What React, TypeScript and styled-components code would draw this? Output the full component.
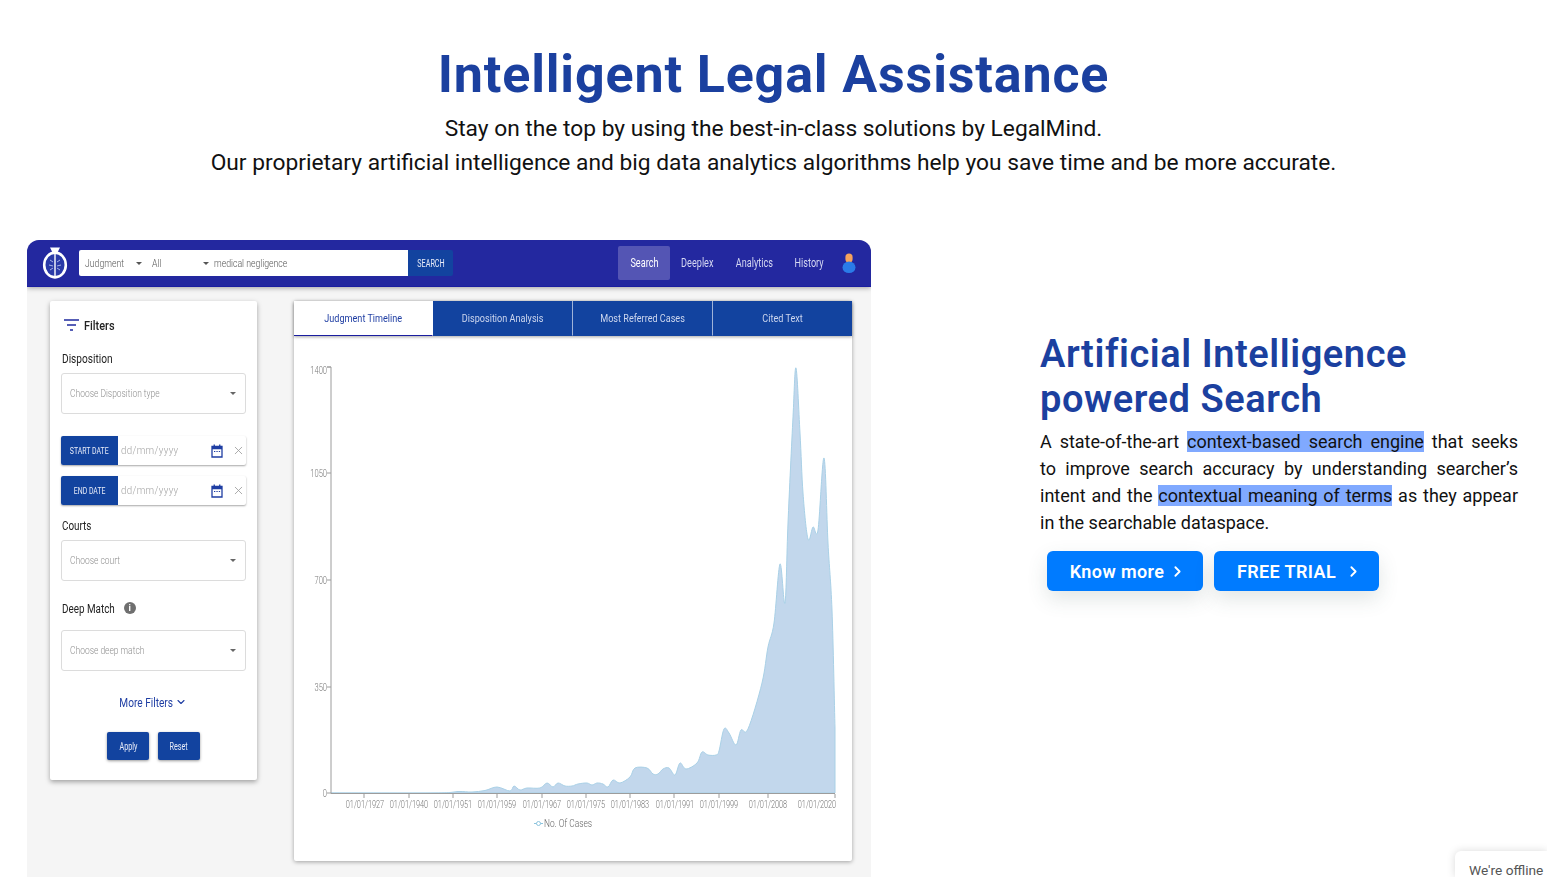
import React from 'react';
import styled, { createGlobalStyle } from 'styled-components';
import { ChevronDown, ChevronRight, X } from 'lucide-react';

const PLEX = `Roboto, "Liberation Sans", sans-serif`;

const GlobalStyle = createGlobalStyle`
  html, body {
    margin: 0;
    height: 100%;
    overflow: hidden;
    background: #fff;
  }
  * { box-sizing: border-box; }
`;

// page coordinates of the area's outline, read off the reference
const AREA: [number, number][] = [
  [331, 793], [435, 793], [458, 791.5], [472, 792], [485, 790.5], [497, 787], [510, 791], [514, 786], [520, 790],
  [527, 788], [540, 788], [547, 783], [553, 787], [558, 783], [565, 786], [572, 786], [578, 784], [587, 783],
  [592, 785], [597, 783], [603, 784], [608, 787], [613, 780], [620, 783], [630, 777], [635, 768], [647, 768],
  [653, 774], [658, 774], [663, 769], [669, 768], [675, 775], [680, 763], [686, 769], [697, 763], [702, 752],
  [708, 755], [716, 755], [719, 751], [724, 729], [729, 733], [736, 745], [741, 730], [748, 729], [762, 683],
  [768, 647], [774, 623], [780, 564], [785, 603], [788, 523], [793, 417], [796, 368], [800, 433], [803, 493],
  [808, 539], [813, 527], [818, 530], [824, 458], [828, 543], [832, 610], [835, 728],
];

const smoothPath = (pts: [number, number][]) => {
  let d = `M${pts[0][0]} ${pts[0][1]}`;
  for (let i = 0; i < pts.length - 1; i++) {
    const p0 = pts[Math.max(i - 1, 0)];
    const p1 = pts[i];
    const p2 = pts[i + 1];
    const p3 = pts[Math.min(i + 2, pts.length - 1)];
    const c1x = p1[0] + (p2[0] - p0[0]) / 6;
    const c1y = p1[1] + (p2[1] - p0[1]) / 6;
    const c2x = p2[0] - (p3[0] - p1[0]) / 6;
    const c2y = p2[1] - (p3[1] - p1[1]) / 6;
    d += ` C${c1x.toFixed(1)} ${c1y.toFixed(1)} ${c2x.toFixed(1)} ${c2y.toFixed(1)} ${p2[0]} ${p2[1]}`;
  }
  return d;
};

const X_TICKS: [number, string][] = [
  [365, '01/01/1927'], [409, '01/01/1940'], [453, '01/01/1951'], [497, '01/01/1959'], [542, '01/01/1967'],
  [586, '01/01/1975'], [630, '01/01/1983'], [675, '01/01/1991'], [719, '01/01/1999'], [768, '01/01/2008'],
  [817, '01/01/2020'],
];
const Y_TICKS: [number, number, string][] = [
  [367, 374, '1400'],
  [473, 477, '1050'],
  [580, 584, '700'],
  [687, 691, '350'],
  [793, 797, '0'],
];

const Logo = () => (
  <svg width="26" height="33" viewBox="0 0 26 33">
    <path d="M8 0.5h10l-2.5 5h-5z" fill="#fff" />
    <ellipse cx="13" cy="18" rx="10.8" ry="12.4" fill="#2a3aa8" stroke="#fff" strokeWidth="2.6" />
    <path d="M13 5v25" stroke="#fff" strokeWidth="1.4" />
    <path d="M8 13l3 2M7 18l4 1M8 23l3-2M18 13l-3 2M19 18l-4 1M18 23l-3-2" stroke="#aab4e6" strokeWidth="1" />
  </svg>
);

const UserIcon = () => (
  <svg width="14" height="20" viewBox="0 0 14 20">
    <rect x="3.4" y="0.5" width="7.2" height="9" rx="3.6" fill="#f5a25d" />
    <path d="M0.5 14.5a6.5 6 0 0 1 13 0a6.5 5.5 0 0 1-13 0z" fill="#2a7be8" />
  </svg>
);

const FilterIcon = () => (
  <svg width="15" height="12" viewBox="0 0 15 12">
    <path d="M0 1h15M3 6h9M6 11h3" stroke="#1f2a9f" strokeWidth="1.6" />
  </svg>
);

const CalendarIcon = () => (
  <svg width="12" height="14" viewBox="0 0 12 14">
    <path d="M1 2.5h10v10.5h-10z" fill="none" stroke="#1f3ea3" strokeWidth="1.3" />
    <path d="M1 2h10v3.2h-10zM2.6 0.4h1.3v2h-1.3zM8.1 0.4h1.3v2h-1.3z" fill="#1f3ea3" />
    <path d="M3 7.5h1.3M5.4 7.5h1.3M7.8 7.5h1.3" stroke="#1f3ea3" strokeWidth="1" />
  </svg>
);

const Select = ({ placeholder }: { placeholder: string }) => (
  <S.Select>
    <S.Squeezed $scale={0.77}>{placeholder}</S.Squeezed>
    <S.Caret $color="#666" />
  </S.Select>
);

const DateField = ({ label }: { label: string }) => (
  <S.DateRow>
    <S.DateLabel>
      <S.Squeezed $center $scale={0.77}>
        {label}
      </S.Squeezed>
    </S.DateLabel>
    <S.DateHint>
      <S.Squeezed $scale={0.88}>dd/mm/yyyy</S.Squeezed>
    </S.DateHint>
    <CalendarIcon />
    <X size={13} color="#9a9a9a" strokeWidth={1.5} />
  </S.DateRow>
);

const Chart = () => (
  <S.ChartSvg viewBox="294 336 558 525">
    <path d={`${smoothPath(AREA)} L835 793 Z`} fill="#c2d7ec" stroke="#a9d0e6" strokeWidth="1" />
    <path d="M327 367h4v426.5h504" fill="none" stroke="#9c9c9c" strokeWidth="1" />
    {Y_TICKS.map(([y, textY, label]) => (
      <g key={label}>
        <path d={`M327 ${y}h4`} stroke="#9c9c9c" />
        <S.AxisText transform={`translate(327 ${textY}) scale(0.72 1)`} textAnchor="end">
          {label}
        </S.AxisText>
      </g>
    ))}
    {[364, 409, 453, 497, 542, 586, 630, 674, 719, 768, 835].map((x) => (
      <path key={x} d={`M${x} 794v4`} stroke="#9c9c9c" />
    ))}
    {X_TICKS.map(([x, label]) => (
      <S.AxisText key={label} transform={`translate(${x} 808) scale(0.7 1)`} textAnchor="middle">
        {label}
      </S.AxisText>
    ))}
    <path d="M534 823.5h9" stroke="#8cc4de" strokeWidth="1" />
    <circle cx="538.5" cy="823.5" r="2" fill="#fff" stroke="#8cc4de" />
    <S.AxisText transform="translate(544 827) scale(0.8 1)" $dark>
      No. Of Cases
    </S.AxisText>
  </S.ChartSvg>
);

const App = () => {
  return (
    <>
      <GlobalStyle />
      <S.Page>
        <S.Hero>
          <S.Title>Intelligent Legal Assistance</S.Title>
          <S.Subtitle>Stay on the top by using the best-in-class solutions by LegalMind.</S.Subtitle>
          <S.Subtitle>
            Our proprietary artificial intelligence and big data analytics algorithms help you save time and be more
            accurate.
          </S.Subtitle>
        </S.Hero>

        <S.Feature>
          <S.Mock>
            <S.MockNav>
              <S.LogoBox>
                <Logo />
              </S.LogoBox>
              <S.SearchBox>
                <S.SearchType $width={67} $pad={10}>
                  <S.Squeezed>Judgment</S.Squeezed>
                  <S.Caret $color="#555" />
                </S.SearchType>
                <S.SearchType $width={61} $pad={4}>
                  <S.Squeezed>All</S.Squeezed>
                  <S.Caret $color="#555" />
                </S.SearchType>
                <S.SearchQuery>
                  <S.Squeezed>medical negligence</S.Squeezed>
                </S.SearchQuery>
              </S.SearchBox>
              <S.SearchButton>
                <S.Squeezed $center $scale={0.72}>
                  SEARCH
                </S.Squeezed>
              </S.SearchButton>
              <S.NavLinks>
                <S.NavLink $active $width={52}>
                  <S.Squeezed $center $scale={0.76}>
                    Search
                  </S.Squeezed>
                </S.NavLink>
                <S.NavLink $width={55}>
                  <S.Squeezed $center $scale={0.76}>
                    Deeplex
                  </S.Squeezed>
                </S.NavLink>
                <S.NavLink $width={58}>
                  <S.Squeezed $center $scale={0.76}>
                    Analytics
                  </S.Squeezed>
                </S.NavLink>
                <S.NavLink $width={52}>
                  <S.Squeezed $center $scale={0.76}>
                    History
                  </S.Squeezed>
                </S.NavLink>
                <UserIcon />
              </S.NavLinks>
            </S.MockNav>

            <S.MockBody>
              <S.FilterCard>
                <S.FilterTitle>
                  <FilterIcon />
                  <S.Squeezed $scale={0.84}>Filters</S.Squeezed>
                </S.FilterTitle>
                <S.FieldLabel>
                  <S.Squeezed $scale={0.81}>Disposition</S.Squeezed>
                </S.FieldLabel>
                <Select placeholder="Choose Disposition type" />
                <S.DateStack>
                  <DateField label="START DATE" />
                  <DateField label="END DATE" />
                </S.DateStack>
                <S.FieldLabel $top={12}>
                  <S.Squeezed>Courts</S.Squeezed>
                </S.FieldLabel>
                <Select placeholder="Choose court" />
                <S.FieldLabel $top={19} $bottom={14}>
                  <S.Squeezed>Deep Match</S.Squeezed>
                  <S.InfoDot>i</S.InfoDot>
                </S.FieldLabel>
                <Select placeholder="Choose deep match" />
                <S.MoreFilters>
                  <S.Squeezed $center $scale={0.81}>
                    More Filters
                  </S.Squeezed>
                  <ChevronDown size={12} strokeWidth={2.2} />
                </S.MoreFilters>
                <S.FilterActions>
                  <S.ActionButton>
                    <S.Squeezed $center $scale={0.72}>
                      Apply
                    </S.Squeezed>
                  </S.ActionButton>
                  <S.ActionButton>
                    <S.Squeezed $center $scale={0.72}>
                      Reset
                    </S.Squeezed>
                  </S.ActionButton>
                </S.FilterActions>
              </S.FilterCard>

              <S.ChartCard>
                <S.Tabs>
                  <S.Tab $active>
                    <S.Squeezed $center>Judgment Timeline</S.Squeezed>
                  </S.Tab>
                  <S.Tab>
                    <S.Squeezed $center>Disposition Analysis</S.Squeezed>
                  </S.Tab>
                  <S.Tab>
                    <S.Squeezed $center>Most Referred Cases</S.Squeezed>
                  </S.Tab>
                  <S.Tab>
                    <S.Squeezed $center>Cited Text</S.Squeezed>
                  </S.Tab>
                </S.Tabs>
                <Chart />
              </S.ChartCard>
            </S.MockBody>
          </S.Mock>

          <S.Copy>
            <S.CopyTitle>
              Artificial Intelligence
              <br />
              powered Search
            </S.CopyTitle>
            <S.CopyText>
              <S.CopyLine>
                A state-of-the-art <S.Mark>context-based search engine</S.Mark> that seeks
              </S.CopyLine>
              <S.CopyLine>to improve search accuracy by understanding searcher’s</S.CopyLine>
              <S.CopyLine>
                intent and the <S.Mark>contextual meaning of terms</S.Mark> as they appear
              </S.CopyLine>
              <S.CopyLine $last>in the searchable dataspace.</S.CopyLine>
            </S.CopyText>
            <S.CopyActions>
              <S.CtaButton $width={156} $gap={5}>
                Know more
                <ChevronRight size={17} strokeWidth={2.6} />
              </S.CtaButton>
              <S.CtaButton $width={165} $gap={9}>
                FREE TRIAL
                <ChevronRight size={17} strokeWidth={2.6} />
              </S.CtaButton>
            </S.CopyActions>
          </S.Copy>
        </S.Feature>

        <S.Offline>We're offline</S.Offline>
      </S.Page>
    </>
  );
};

export default App;

const S = {
  Page: styled.div`
    position: relative;
    height: 877px;
    overflow: hidden;
    font-family: ${PLEX};
    color: #111;
  `,

  Hero: styled.header`
    display: flex;
    flex-direction: column;
    align-items: center;
    height: 240px;
    padding-top: 44px;
  `,

  Title: styled.h1`
    margin: 0 0 6px;
    font-size: 52px;
    line-height: 62px;
    font-weight: 700;
    letter-spacing: 0.85px;
    color: #1b409f;
    white-space: nowrap;
  `,

  Subtitle: styled.p`
    margin: 0;
    font-size: 22.75px;
    line-height: 34px;
    color: #111;
    white-space: nowrap;
  `,

  Feature: styled.section`
    display: flex;
    padding-left: 27px;
  `,

  Mock: styled.div`
    flex: none;
    width: 844px;
    height: 637px;
    background: #f5f5f5;
    border-radius: 12px 12px 0 0;
    overflow: hidden;
    filter: blur(0.3px);
  `,

  // the mock's condensed face isn't installed, so the text is narrowed instead
  Squeezed: styled.span<{ $scale?: number; $center?: boolean }>`
    display: inline-block;
    white-space: nowrap;
    transform: scaleX(${(p) => p.$scale ?? 0.79});
    transform-origin: ${(p) => (p.$center ? 'center' : 'left')};
  `,

  MockNav: styled.div`
    display: flex;
    align-items: center;
    height: 47px;
    padding-left: 15px;
    background: #23289f;
    border-bottom: 1px solid #1a1ea0;
    box-shadow: 0 1px 5px rgba(0, 0, 0, 0.35);
  `,

  LogoBox: styled.div`
    flex: none;
    display: flex;
    width: 37px;
  `,

  SearchBox: styled.div`
    flex: none;
    display: flex;
    align-items: center;
    width: 329px;
    height: 26px;
    padding-left: 6px;
    background: #fff;
    border-radius: 2px 0 0 2px;
    font-size: 11px;
    font-weight: 300;
    color: #555;
  `,

  SearchType: styled.div<{ $width: number; $pad: number }>`
    flex: none;
    display: flex;
    align-items: center;
    justify-content: space-between;
    width: ${(p) => p.$width}px;
    padding-right: ${(p) => p.$pad}px;
  `,

  SearchQuery: styled.div`
    padding-left: 1px;
  `,

  SearchButton: styled.div`
    flex: none;
    display: flex;
    align-items: center;
    justify-content: center;
    width: 45px;
    height: 26px;
    background: #12439f;
    border-radius: 0 2px 2px 0;
    font-size: 10px;
    color: #e8ecf8;
  `,

  NavLinks: styled.nav`
    flex: none;
    display: flex;
    align-items: center;
    margin-left: 165px;

    svg {
      margin-left: 7px;
    }
  `,

  NavLink: styled.div<{ $active?: boolean; $width: number }>`
    display: flex;
    align-items: center;
    justify-content: center;
    width: ${(p) => p.$width}px;
    height: 34px;
    background: ${(p) => (p.$active ? '#5455b4' : 'transparent')};
    border-radius: 2px;
    font-size: 12px;
    color: ${(p) => (p.$active ? '#fff' : '#d5d8f2')};
  `,

  MockBody: styled.div`
    display: flex;
    align-items: flex-start;
    gap: 37px;
    padding: 14px 0 0 23px;
  `,

  FilterCard: styled.aside`
    flex: none;
    display: flex;
    flex-direction: column;
    width: 207px;
    height: 479px;
    padding: 0 11px;
    background: #fff;
    border-radius: 2px;
    box-shadow: 0 2px 5px rgba(0, 0, 0, 0.35);
  `,

  FilterTitle: styled.div`
    display: flex;
    align-items: center;
    gap: 5px;
    height: 16px;
    margin: 16px 0 0 3px;
    font-size: 13px;
    font-weight: 500;
    color: #222;
  `,

  FieldLabel: styled.div<{ $top?: number; $bottom?: number }>`
    display: flex;
    align-items: center;
    height: 16px;
    margin: ${(p) => p.$top ?? 17}px 0 ${(p) => p.$bottom ?? 7}px;
    padding-left: 1px;
    font-size: 12.5px;
    color: #222;
  `,

  InfoDot: styled.span`
    display: flex;
    align-items: center;
    justify-content: center;
    width: 12px;
    height: 12px;
    margin-left: -5px;
    border-radius: 50%;
    background: #6f6f6f;
    font-size: 9px;
    font-weight: 700;
    color: #fff;
  `,

  Select: styled.div`
    display: flex;
    align-items: center;
    justify-content: space-between;
    height: 41px;
    padding: 0 9px 0 8px;
    border: 1px solid #dcdcdc;
    border-radius: 3px;
    font-size: 11px;
    font-weight: 300;
    color: #8f8f8f;
    overflow: hidden;
  `,

  Caret: styled.i<{ $color: string }>`
    flex: none;
    width: 0;
    height: 0;
    border-left: 3px solid transparent;
    border-right: 3px solid transparent;
    border-top: 3px solid ${(p) => p.$color};
  `,

  DateStack: styled.div`
    display: flex;
    flex-direction: column;
    gap: 11px;
    margin-top: 22px;
  `,

  DateRow: styled.div`
    display: flex;
    align-items: center;
    height: 29px;
    padding-right: 1px;
    background: #fff;
    border-radius: 2px;
    box-shadow: 0 1px 2px rgba(0, 0, 0, 0.35);

    svg + svg {
      margin-left: 9px;
    }
  `,

  DateLabel: styled.div`
    flex: none;
    display: flex;
    align-items: center;
    justify-content: center;
    width: 57px;
    height: 100%;
    margin-right: 3px;
    background: #12439f;
    border-radius: 2px 0 0 2px;
    font-size: 9px;
    color: #e8ecf8;
  `,

  DateHint: styled.div`
    flex: 1;
    font-size: 11px;
    font-weight: 300;
    color: #a4a4a4;
    letter-spacing: 0.4px;
  `,

  MoreFilters: styled.div`
    display: flex;
    align-items: center;
    height: 16px;
    margin-top: 23px;
    padding-left: 52px;
    font-size: 12.5px;
    color: #1f3ea3;

    svg {
      margin-left: -4px;
    }
  `,

  FilterActions: styled.div`
    display: flex;
    justify-content: center;
    gap: 9px;
    margin-top: 22px;
  `,

  ActionButton: styled.div`
    display: flex;
    align-items: center;
    justify-content: center;
    width: 42px;
    height: 28px;
    background: #12439f;
    border-radius: 2px;
    box-shadow: 0 1px 3px rgba(0, 0, 0, 0.4);
    font-size: 10px;
    color: #e8ecf8;
  `,

  ChartCard: styled.div`
    flex: none;
    width: 558px;
    height: 560px;
    background: #fff;
    border-radius: 2px;
    box-shadow: 0 1px 4px rgba(0, 0, 0, 0.35);
  `,

  Tabs: styled.div`
    display: grid;
    grid-template-columns: 139px 140px 140px 139px;
    height: 35px;
    box-shadow: 0 1px 3px rgba(0, 0, 0, 0.35);
  `,

  Tab: styled.div<{ $active?: boolean }>`
    display: flex;
    align-items: center;
    justify-content: center;
    background: ${(p) => (p.$active ? '#fff' : '#12439f')};
    border-bottom: 1px solid ${(p) => (p.$active ? '#1a1ea0' : '#12439f')};
    border-right: 1px solid ${(p) => (p.$active ? 'transparent' : '#9fb3d8')};
    font-size: 11.5px;
    color: ${(p) => (p.$active ? '#1f3ea3' : '#ccd6ee')};

    &:last-child {
      border-right: none;
    }
  `,

  ChartSvg: styled.svg`
    display: block;
    width: 558px;
    height: 525px;
  `,

  AxisText: styled.text<{ $dark?: boolean }>`
    font-family: ${PLEX};
    font-size: 10.5px;
    font-weight: 300;
    fill: ${(p) => (p.$dark ? '#666' : '#777')};
  `,

  Copy: styled.div`
    flex: none;
    width: 478px;
    margin: 92px 0 0 169px;
  `,

  CopyTitle: styled.h2`
    margin: 0 0 6px;
    font-size: 38px;
    line-height: 45px;
    font-weight: 600;
    letter-spacing: 0.57px;
    color: #1b409f;
  `,

  CopyText: styled.div`
    font-size: 18px;
    line-height: 27px;
    color: #111;
  `,

  CopyLine: styled.p<{ $last?: boolean }>`
    margin: 0;
    text-align: justify;
    text-align-last: ${(p) => (p.$last ? 'left' : 'justify')};
  `,

  Mark: styled.span`
    background: #80a9ff;
  `,

  CopyActions: styled.div`
    display: flex;
    gap: 11px;
    margin: 15px 0 0 7px;
  `,

  CtaButton: styled.div<{ $width: number; $gap: number }>`
    display: flex;
    align-items: center;
    justify-content: center;
    gap: ${(p) => p.$gap}px;
    width: ${(p) => p.$width}px;
    height: 40px;
    padding-left: 6px;
    background: #007bff;
    border-radius: 6px;
    box-shadow: 0 8px 20px rgba(60, 90, 80, 0.15);
    font-size: 18px;
    font-weight: 600;
    letter-spacing: 0.4px;
    color: #fff;
  `,

  Offline: styled.div`
    position: absolute;
    right: 0;
    bottom: 0;
    width: 92px;
    height: 26px;
    padding: 10px 0 0 14px;
    background: #fff;
    border-radius: 6px 0 0 0;
    box-shadow: 0 0 8px rgba(0, 0, 0, 0.15);
    font-size: 13.7px;
    line-height: 18px;
    color: #555;
    white-space: nowrap;
    overflow: hidden;
  `,
};
